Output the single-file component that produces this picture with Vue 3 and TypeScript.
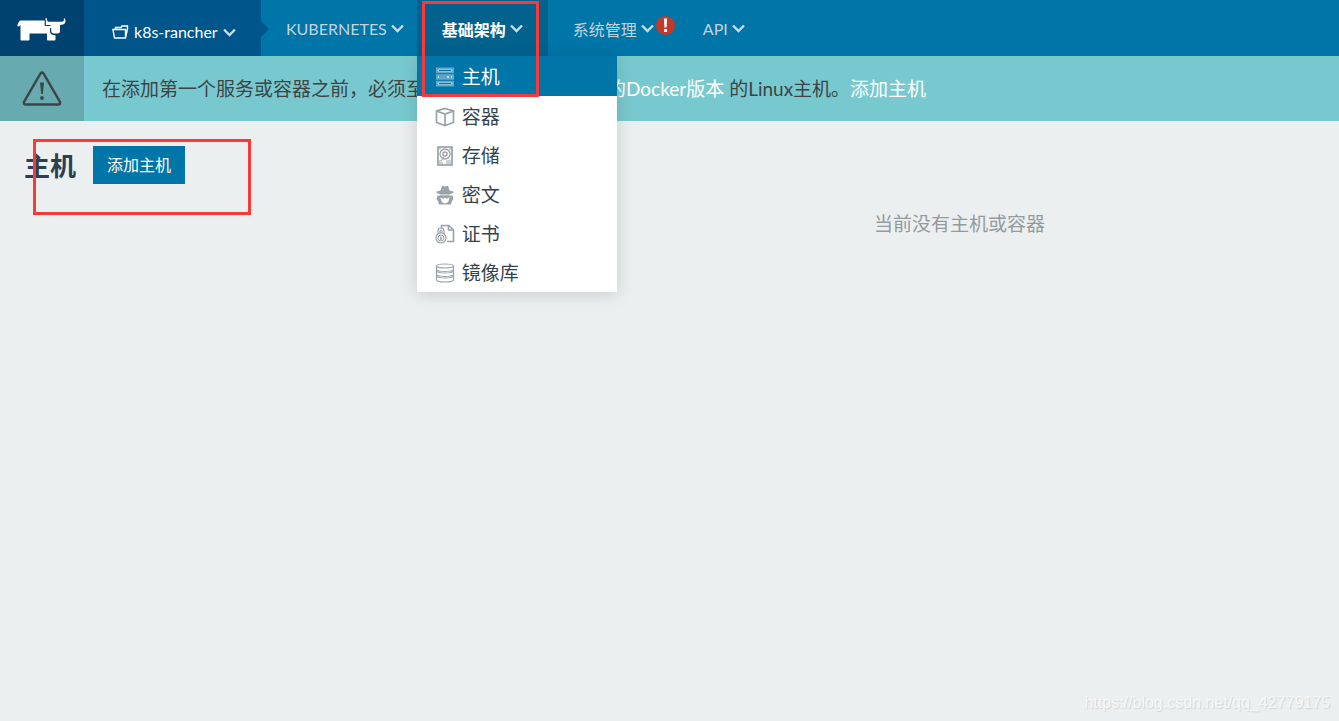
<script setup lang="ts">
interface MenuEntry {
  id: string
  label: string
}

const menu: MenuEntry[] = [
  { id: 'host', label: '主机' },
  { id: 'container', label: '容器' },
  { id: 'storage', label: '存储' },
  { id: 'secret', label: '密文' },
  { id: 'certificate', label: '证书' },
  { id: 'registry', label: '镜像库' },
]
const active = 'host'
</script>

<template>
  <div class="page">
    <header class="topbar">
      <a href="#" class="logo" aria-label="Rancher">
        <svg width="50" height="24" viewBox="0 0 50 24" fill="#fff">
          <path d="M3.500 2.500Q1 3.500 .3 8L2 8.500L3.500 7V21.500Q3.500 22.500 4.500 22.500H11.500Q12.500 22.500 12.500 21.500V15.500H30V21.500Q30 22.500 31 22.500H37.500Q38.500 22.500 38.500 21.500V17.500Q33.500 17 33 14V10H34.200V13Q34.500 15.500 37 15.500H40.500Q43 15.500 43 13V7L46 6.500Q49.500 5.500 48 .3L46.800 .8Q47.500 3.500 45 3.800H31.500Q29.800 3.500 30 .3H28.500V2.500Z" />
          <path d="M28.300 2V7.500H33.500" fill="none" stroke="#00426f" stroke-width="1.200" />
        </svg>
      </a>
      <button type="button" class="project">
        <svg width="17" height="14" viewBox="0 0 17 14" fill="none" stroke="#fff" stroke-width="1.400">
          <path d="M3.500 4V2.500L9 2.500L10 1H15.500V4M1 4.500H13.500V13H2.500ZM13.500 13L15.500 4" />
        </svg>
        <span>k8s-rancher</span>
        <svg class="chevron" width="13" height="9" viewBox="0 0 13 9"><path d="M1 1.500L6.500 7L12 1.500" /></svg>
      </button>
      <nav class="nav">
        <button type="button" class="tab kube">
          KUBERNETES
          <svg class="chevron" width="13" height="9" viewBox="0 0 13 9"><path d="M1 1.500L6.500 7L12 1.500" /></svg>
        </button>
        <div class="tab-holder">
          <button type="button" class="tab current" aria-expanded="true">
            基础架构
            <svg class="chevron" width="13" height="9" viewBox="0 0 13 9"><path d="M1 1.500L6.500 7L12 1.500" /></svg>
          </button>
          <ul class="menu">
            <li v-for="entry in menu" :key="entry.id">
              <a href="#" class="entry" :class="{ active: entry.id === active }">
                <svg class="icon" width="20" height="20" viewBox="0 0 20 20">
                  <g v-if="entry.id === 'host'" stroke="none">
                    <path d="M1 .5H19V6.200H1ZM1 7.200H19V12.800H1ZM1 13.800H19V19.500H1Z" fill="#64a8ca" />
                    <path d="M3 2.500H17V4.500H3ZM3 9H17V11H3ZM3 15.500H17V17.500H3Z" fill="#b5d7e7" />
                    <path d="M4 3H16V4H4ZM4 9.500H12V10.500H4ZM14 9.500H16V10.500H14ZM4 16H16V17H4Z" fill="#0075a8" />
                  </g>
                  <g v-else-if="entry.id === 'container'" stroke-width="1.700">
                    <path d="M10 1.500L18.500 4V15.500L10 18.500L1.500 15.500V4ZM1.500 4L10 7L18.500 4M10 7V18" />
                  </g>
                  <g v-else-if="entry.id === 'storage'">
                    <rect x="3" y="1" width="14" height="18" stroke-width="1.700" />
                    <circle cx="10" cy="8" r="5" stroke-width="1.300" /><circle cx="10" cy="8" r="2" stroke-width="1.500" />
                    <path d="M9 11L6 15H4M4 17H8M11 15H16M11 17H16M4 3H6M14 3H16" />
                  </g>
                  <g v-else-if="entry.id === 'secret'" fill="currentColor" stroke="none">
                    <path d="M5.500 5.500L7 .8L10 1.500L13 .8L14.500 5.500L18.500 6.500V8L15.500 9V11L17.500 10.500L18.500 14L17 16L16 19.500H4L3 16L1.500 14L2.500 10.500L4.500 11V9L1.500 8V6.500Z" />
                    <path d="M5.500 12.500L7 13Q8 14.500 9.500 13L10 12.500L10.500 13Q12 14.500 13 13L14.500 12.500Q14 16 12.500 17.500L10 18.500L7.500 17.500Q6 16 5.500 12.500ZM1.500 8.300L5 9.500H15L18.500 8.300V9.200L15 10.300H5L1.500 9.200Z" fill="#fff" />
                  </g>
                  <g v-else-if="entry.id === 'certificate'">
                    <path d="M6.500 4V1.500H14L18.500 6V17.500H12M13.500 1.500V6H18.500" stroke-width="1.600" />
                    <path d="M3 10V7Q3 4 6 4T9 7V10M5 9V7.500Q5 6 6 6T7 7.500V9" stroke-width="1.200" />
                    <circle cx="6" cy="14" r="5" stroke-width="1.200" /><circle cx="6" cy="14" r="3" /><path d="M6 12.500V16" stroke-width="1.600" />
                  </g>
                  <g v-else stroke-width="1.200">
                    <ellipse cx="10" cy="3" rx="8.500" ry="2" />
                    <path d="M1.500 3V17Q2 19 10 19T18.500 17V3M1.500 6.500Q3 8.500 10 8.500T18.500 6.500M1.500 8Q3 10 10 10T18.500 8M1.500 11.500Q3 13.500 10 13.500T18.500 11.500M1.500 13Q3 15 10 15T18.500 13" />
                  </g>
                </svg>
                <span>{{ entry.label }}</span>
              </a>
            </li>
          </ul>
        </div>
        <button type="button" class="tab admin">
          系统管理
          <svg class="chevron" width="13" height="9" viewBox="0 0 13 9"><path d="M1 1.500L6.500 7L12 1.500" /></svg>
          <span class="alert">
            <svg width="19" height="19" viewBox="0 0 19 19"><circle cx="9.500" cy="9.500" r="9.500" fill="#c0392b" /><path d="M7.900 2.500H11.100L10.600 11.500H8.400ZM8 13H11V16H8Z" fill="#fff" /></svg>
          </span>
        </button>
        <button type="button" class="tab">
          API
          <svg class="chevron" width="13" height="9" viewBox="0 0 13 9"><path d="M1 1.500L6.500 7L12 1.500" /></svg>
        </button>
      </nav>
    </header>

    <section class="banner">
      <div class="banner-icon">
        <svg width="40" height="35" viewBox="0 0 40 35">
          <path d="M18.500 2.500Q20 .5 21.500 2.500L38 31Q38.500 33.500 36.500 33.500H3.500Q1.500 33.500 2 31Z" fill="none" stroke="#3d4445" stroke-width="2.400" />
          <path d="M18 11.500H22L20.800 23H19.200Z" fill="#3d4445" /><circle cx="20" cy="27" r="1.900" fill="#3d4445" />
        </svg>
      </div>
      <p>在添加第一个服务或容器之前，必须至少添加1台安装了<a href="#">支持的Docker版本</a> 的Linux主机。<a href="#">添加主机</a></p>
    </section>

    <main class="content">
      <div class="heading">
        <h1>主机</h1>
        <button type="button" class="add">添加主机</button>
        <span class="mark mark-heading"></span>
      </div>
      <p class="empty">当前没有主机或容器</p>
    </main>

    <span class="mark mark-menu"></span>
    <span class="watermark">https://blog.csdn.net/qq_42779175</span>
  </div>
</template>

<style>
body {
  margin: 0;
  background: #ebeff0;
}
</style>

<style scoped>
.page {
  position: relative;
  min-height: 100vh;
  box-sizing: border-box;
  background: #ebeff0;
  color: #34444f;
  font-family: Lato, "Noto Sans CJK SC", sans-serif;
  font-size: 16px;
}
button {
  border: 0;
  margin: 0;
  background: none;
  font: inherit;
  cursor: pointer;
}
a {
  text-decoration: none;
}
.topbar {
  display: flex;
  height: 56px;
  background: #0075a8;
}
.logo {
  display: flex;
  align-items: center;
  box-sizing: border-box;
  width: 84px;
  padding: 3px 0 0 17px;
  background: #00426f;
}
.project {
  position: relative;
  display: flex;
  align-items: center;
  gap: 5px;
  width: 177px;
  padding: 8px 0 0 28px;
  background: #00558b;
  color: #fff;
}
.project span {
  padding-bottom: 2px;
}
.project::after {
  content: "";
  position: absolute;
  left: 100%;
  top: 21px;
  border: 8px solid transparent;
  border-right: 0;
  border-left-color: #00558b;
}
.chevron {
  flex: none;
  fill: none;
  stroke: #c9dbe4;
  stroke-width: 2.4;
}
.nav {
  display: flex;
}
.tab {
  display: flex;
  align-items: center;
  gap: 4px;
  height: 56px;
  padding: 3px 25px 2px;
  color: #c3d3dc;
  white-space: nowrap;
}
.kube {
  padding-right: 13px;
}
.tab-holder {
  position: relative;
}
.current {
  background: #00628d;
  color: #fff;
  font-weight: 700;
}
.admin {
  padding-right: 3px;
}
.alert {
  display: flex;
  margin-left: -2px;
  padding-bottom: 6px;
}
.menu {
  position: absolute;
  z-index: 2;
  top: 100%;
  left: 0;
  width: 200px;
  margin: 0;
  padding: 0 0 1px;
  list-style: none;
  background: #fff;
  box-shadow: 0 2px 16px rgba(0, 0, 0, 0.15);
}
.entry {
  display: flex;
  align-items: center;
  gap: 7px;
  box-sizing: border-box;
  height: 39px;
  padding-left: 18px;
  color: #34444f;
  font-size: 19px;
}
.entry.active {
  height: 40px;
  padding-bottom: 2px;
  background: #0075a8;
  color: #fff;
}
.icon {
  margin-top: 3px;
  fill: none;
  stroke: currentColor;
  color: #98a3a9;
}
.banner {
  display: flex;
  min-height: 65px;
  background: #78c9cf;
  color: #3d4445;
  font-size: 19px;
}
.banner-icon {
  display: flex;
  align-items: center;
  justify-content: center;
  width: 84px;
  background: #67abb0;
}
.banner p {
  align-self: center;
  margin: 0;
  padding: 0 0 2px 18px;
  white-space: nowrap;
}
.banner a {
  color: #fff;
}
.content {
  padding-top: 21px;
}
.heading {
  position: relative;
  display: flex;
  align-items: center;
  gap: 17px;
  height: 46px;
  padding-left: 24px;
}
.heading h1 {
  margin: 0;
  padding-bottom: 2px;
  color: #2d3e50;
  font-size: 26px;
}
.add {
  height: 38px;
  padding: 0 14px 2px;
  background: #0075a8;
  color: #fff;
}
.empty {
  margin: 21px 0 0 580px;
  color: #949a9d;
  font-size: 19px;
  text-align: center;
}
.mark {
  position: absolute;
  z-index: 3;
  box-sizing: border-box;
  border: 3px solid #fc3838;
  pointer-events: none;
}
.mark-menu {
  top: 1px;
  left: 422px;
  width: 117px;
  height: 96px;
}
.mark-heading {
  top: -3px;
  left: 33px;
  width: 218px;
  height: 76px;
}
.watermark {
  position: absolute;
  right: 9px;
  bottom: 9px;
  color: #f6f8f8;
  font-family: "Liberation Sans", Arial, sans-serif;
  text-shadow: 1px 1px 1px #d0d4d5;
}
</style>
